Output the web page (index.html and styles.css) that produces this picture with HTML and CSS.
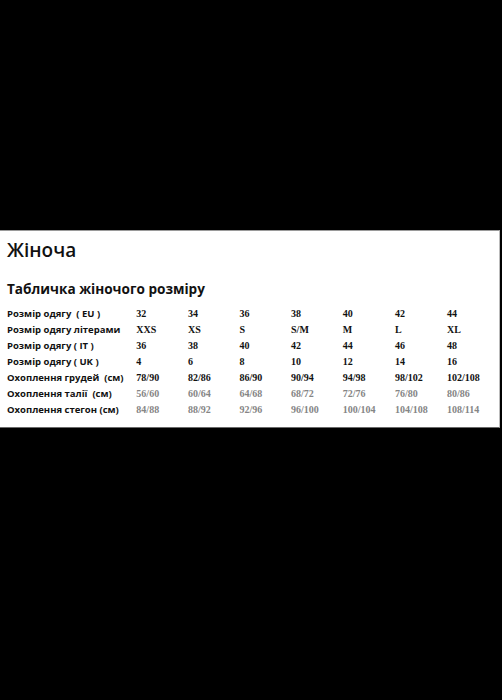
FILE: index.html
```html
<!DOCTYPE html>
<html lang="uk">
<head>
<meta charset="utf-8">
<title>Жіноча</title>
<link rel="stylesheet" href="styles.css">
</head>
<body>
<div class="sheet">
  <h1 class="title">Жіноча</h1>
  <h2 class="subtitle">Табличка жіночого розміру</h2>
  <table class="sizes">
    <tr><th>Розмір одягу&nbsp; ( EU )</th><td>32</td><td>34</td><td>36</td><td>38</td><td>40</td><td>42</td><td>44</td></tr>
    <tr><th>Розмір одягу літерами</th><td>XXS</td><td>XS</td><td>S</td><td>S/M</td><td>M</td><td>L</td><td>XL</td></tr>
    <tr><th>Розмір одягу ( IT )</th><td>36</td><td>38</td><td>40</td><td>42</td><td>44</td><td>46</td><td>48</td></tr>
    <tr><th>Розмір одягу ( UK )</th><td>4</td><td>6</td><td>8</td><td>10</td><td>12</td><td>14</td><td>16</td></tr>
    <tr><th>Охоплення грудей&nbsp; (см)</th><td>78/90</td><td>82/86</td><td>86/90</td><td>90/94</td><td>94/98</td><td>98/102</td><td>102/108</td></tr>
    <tr class="muted"><th>Охоплення талії&nbsp; (см)</th><td>56/60</td><td>60/64</td><td>64/68</td><td>68/72</td><td>72/76</td><td>76/80</td><td>80/86</td></tr>
    <tr class="muted"><th>Охоплення стегон (см)</th><td>84/88</td><td>88/92</td><td>92/96</td><td>96/100</td><td>100/104</td><td>104/108</td><td>108/114</td></tr>
  </table>
</div>
</body>
</html>
```
FILE: styles.css
```css
html, body {
  margin: 0;
  padding: 0;
  background: #000;
}
body {
  height: 700px;
  overflow: hidden;
  padding-top: 230px;
  box-sizing: border-box;
}
.sheet {
  width: 500px;
  background: #fff;
  border-top: 1px solid #9a9a9a;
  border-bottom: 1px solid #6a6a6a;
  border-right: 1px solid #bbb;
  padding: 9px 0 9px 7px;
  box-sizing: border-box;
  height: 198px;
}
.title {
  margin: 0;
  font-family: "Open Sans", sans-serif;
  font-weight: 600;
  font-size: 19px;
  line-height: 20px;
  color: #111;
}
.subtitle {
  margin: 20px 0 0;
  font-family: "Open Sans", sans-serif;
  font-weight: 700;
  font-size: 13.6px;
  line-height: 18px;
  color: #111;
}
.sizes {
  margin-top: 8px;
  border-collapse: collapse;
}
.sizes th {
  width: 130px;
  padding: 0;
  text-align: left;
  font-family: "Open Sans", sans-serif;
  font-weight: 700;
  font-size: 9.5px;
  line-height: 16px;
  color: #111;
  white-space: nowrap;
}
.sizes td {
  width: 53px;
  padding: 0;
  text-align: left;
  font-family: "Liberation Serif", serif;
  font-weight: 700;
  font-size: 10px;
  line-height: 16px;
  color: #111;
  white-space: nowrap;
}
.sizes .muted td {
  color: #858585;
}
```
